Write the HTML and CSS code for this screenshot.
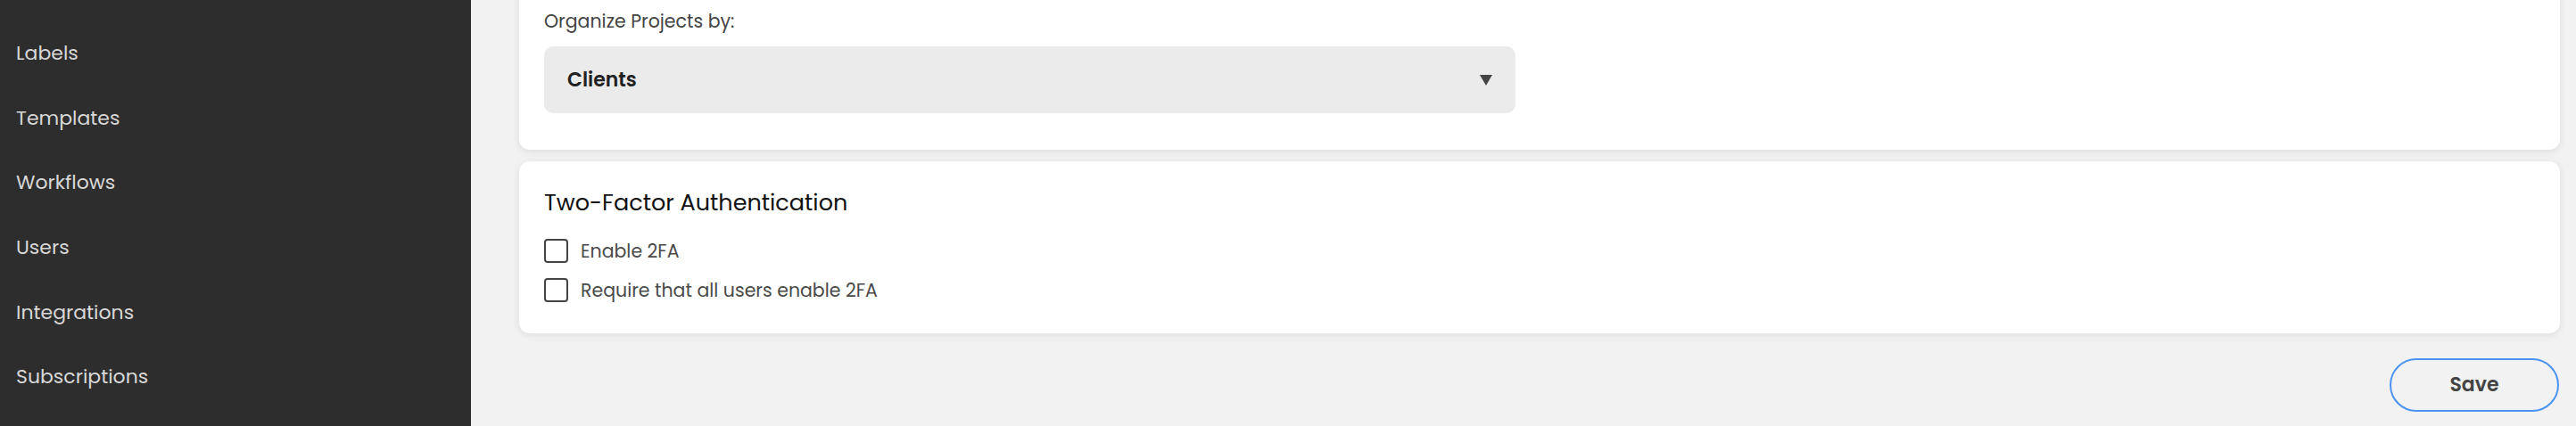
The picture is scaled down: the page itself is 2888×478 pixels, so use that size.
FILE: index.html
```html
<!DOCTYPE html>
<html lang="en">
<head>
<meta charset="utf-8">
<title>Settings</title>
<link rel="stylesheet" href="styles.css">
</head>
<body>
<div class="app">
  <nav class="sidebar">
    <a class="nav-item">Labels</a>
    <a class="nav-item">Templates</a>
    <a class="nav-item">Workflows</a>
    <a class="nav-item">Users</a>
    <a class="nav-item">Integrations</a>
    <a class="nav-item">Subscriptions</a>
  </nav>
  <main class="main">
    <section class="card card-projects">
      <label class="field-label">Organize Projects by:</label>
      <div class="select">
        <span class="select-value">Clients</span>
        <span class="select-arrow"></span>
      </div>
    </section>
    <section class="card card-2fa">
      <h2 class="card-title">Two-Factor Authentication</h2>
      <div class="checks">
        <label class="check-row"><span class="checkbox"></span><span class="check-text">Enable 2FA</span></label>
        <label class="check-row"><span class="checkbox"></span><span class="check-text">Require that all users enable 2FA</span></label>
      </div>
    </section>
    <div class="actions">
      <button class="btn-save">Save</button>
    </div>
  </main>
</div>
</body>
</html>
```
FILE: styles.css
```css
* { box-sizing: border-box; }
html, body {
  margin: 0;
  padding: 0;
  height: 478px;
  overflow: hidden;
  background: #f2f2f2;
  font-family: "Poppins", "Open Sans", "Noto Sans", sans-serif;
}
.app {
  display: flex;
  height: 478px;
}
.sidebar {
  width: 528px;
  flex: none;
  background: #2d2d2d;
  padding-top: 23px;
  display: flex;
  flex-direction: column;
}
.nav-item {
  height: 72.7px;
  display: flex;
  align-items: center;
  padding-left: 18px;
  font-size: 22px;
  line-height: 31px;
  color: #d8d8d8;
}
.main {
  flex: 1;
  padding: 0 18px 0 54px;
  display: flex;
  flex-direction: column;
}
.card {
  background: #ffffff;
  border-radius: 12px;
  box-shadow: 0 2px 8px rgba(0, 0, 0, 0.09);
  padding-left: 28px;
  padding-right: 28px;
}
.card-projects {
  margin-top: -20px;
  padding-top: 28.5px;
  padding-bottom: 41px;
}
.field-label {
  display: block;
  font-size: 20.5px;
  line-height: 30px;
  color: #444444;
}
.select {
  margin-top: 13.5px;
  width: 1089px;
  height: 75px;
  background: #ebebeb;
  border-radius: 10px;
  display: flex;
  align-items: center;
  justify-content: space-between;
  padding: 0 26px;
}
.select-value {
  font-size: 22px;
  line-height: 31px;
  font-weight: 600;
  color: #222222;
}
.select-arrow {
  width: 0;
  height: 0;
  border-left: 7.5px solid transparent;
  border-right: 7.5px solid transparent;
  border-top: 12px solid #444444;
}
.card-2fa {
  margin-top: 13px;
  padding-top: 27.6px;
  padding-bottom: 35px;
}
.card-title {
  margin: 0;
  font-size: 25.5px;
  line-height: 36px;
  font-weight: 400;
  color: #111111;
}
.checks {
  margin-top: 23.4px;
  display: flex;
  flex-direction: column;
  gap: 17px;
}
.check-row {
  display: flex;
  align-items: center;
  gap: 14px;
  height: 27px;
}
.checkbox {
  width: 27px;
  height: 27px;
  border: 2.5px solid #444444;
  border-radius: 4px;
  background: #ffffff;
  flex: none;
}
.check-text {
  font-size: 20.5px;
  line-height: 27px;
  color: #4a4a4a;
}
.actions {
  margin-top: 28px;
  display: flex;
  justify-content: flex-end;
  padding-right: 1px;
}
.btn-save {
  width: 190px;
  height: 60px;
  border: 2px solid #4b93f2;
  border-radius: 30px;
  background: transparent;
  font-family: inherit;
  font-size: 22px;
  font-weight: 600;
  color: #444444;
}
```
